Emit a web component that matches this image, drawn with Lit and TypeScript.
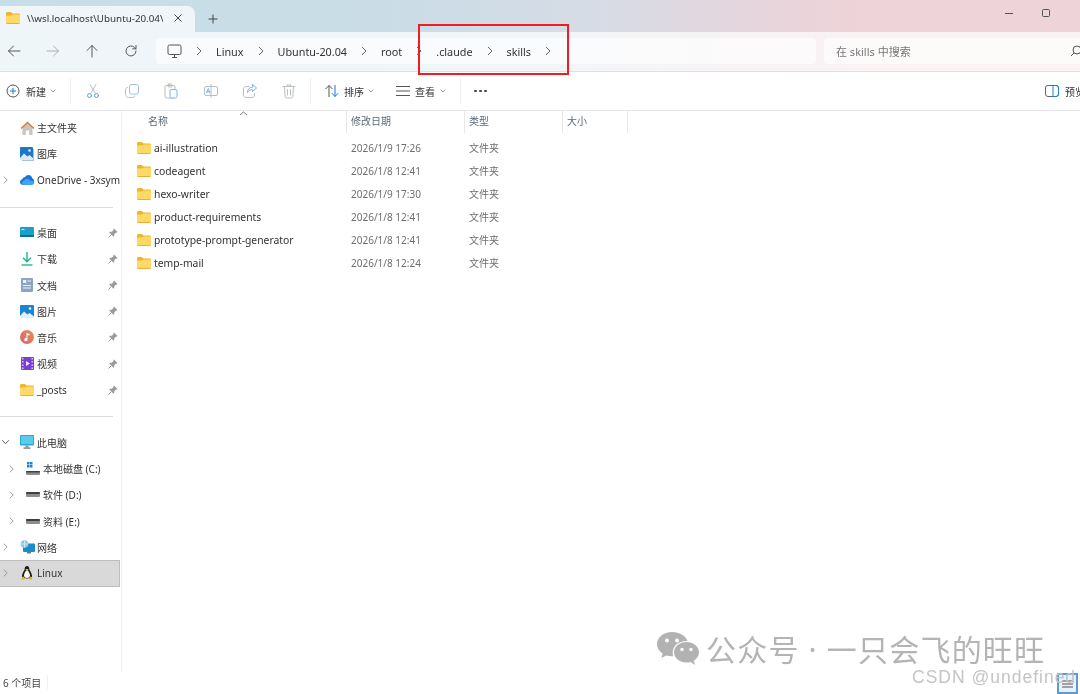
import { LitElement, html, svg, css } from "lit";
import { customElement } from "lit/decorators.js";

const stroke = (body: unknown, color = "#5f6368", w = 1) => html`<svg
    width="16"
    height="16"
    viewBox="0 0 16 16"
    fill="none"
    stroke=${color}
    stroke-width=${w}
    stroke-linecap="round"
    stroke-linejoin="round"
>
    ${body}
</svg>`;

const folder = html`<svg width="14" height="12" viewBox="0 0 14 12">
    <path d="M0 1.5C0 .7.6 0 1.4 0h3.4l1.8 1.6h6C13.4 1.6 14 2.200 14 3v2H0z" fill="#f0b429" />
    <path d="M0 3.600h5l1.700-1.200h6C13.400 2.400 14 3 14 3.800v6.800c0 .8-.6 1.400-1.400 1.400H1.400C.6 12 0 11.400 0 10.600z" fill="#ffd965" />
    <path d="M0 11h14v-.4c0 .8-.6 1.400-1.400 1.400H1.400C.6 12 0 11.400 0 10.600z" fill="#e9b13a" />
</svg>`;

const chevron = html`<svg class="chev" width="6" height="10" viewBox="0 0 6 10" fill="none" stroke="#666" stroke-width="1">
    <path d="M1 1l4 4-4 4" />
</svg>`;

const caret = html`<svg class="caret" width="6" height="4" viewBox="0 0 6 4" fill="none" stroke="#999" stroke-width="1">
    <path d="M.7.7L3 3 5.300.7" />
</svg>`;

const nav = [
    { off: false, path: svg`<path d="M14 8H2.500M7.500 3L2.500 8l5 5" />` },
    { off: true, path: svg`<path d="M2 8h11.500M8.500 3l5 5-5 5" />` },
    { off: false, path: svg`<path d="M8 14V2.500M3 7.500l5-5 5 5" />` },
    { off: false, path: svg`<path d="M13 8a5 5 0 1 1-1.500-3.600L13 5.800M13 2.500v3.300H9.700" />` },
];

const crumbs = ["Linux", "Ubuntu-20.04", "root", ".claude", "skills"];

const grey = "#b9bec2";
const actions = [
    svg`<circle cx="4.500" cy="12.500" r="2" stroke="#5aa2dc" /><circle cx="11.500" cy="12.500" r="2" stroke="#5aa2dc" /><path d="M5.500 10.800L11 1.500M10.500 10.800L5 1.500" stroke=${grey} />`,
    svg`<rect x="5.500" y="1.500" width="9" height="9.500" rx="2" stroke="#9cc3e2" /><path d="M3.500 4.500C2.300 4.800 1.500 5.700 1.500 7v4.500c0 1.700 1.300 3 3 3h4c1.200 0 2.100-.7 2.500-1.700" stroke=${grey} />`,
    svg`<rect x="2" y="2.500" width="10" height="12.500" rx="1.500" stroke=${grey} /><rect x="5" y="1" width="4" height="3" rx="1" stroke=${grey} /><rect x="7" y="6.500" width="7" height="8.500" rx="1.500" stroke="#7db5e2" fill="#fff" />`,
    svg`<rect x="1.500" y="3.500" width="13" height="9" rx="1.500" stroke=${grey} /><path d="M8 1.500v13" stroke=${grey} /><path d="M3.500 10l1.800-4.500L7 10M4 8.600h2.600" stroke="#7db5e2" />`,
    svg`<path d="M7 3.500H4C2.600 3.500 1.500 4.600 1.500 6v6c0 1.400 1.100 2.500 2.500 2.500h6c1.400 0 2.500-1.100 2.500-2.500v-1.500" stroke=${grey} /><path d="M10.500 1.500l4 3.500-4 3.500V6.700C8 6.700 6.500 7.500 5.500 9.500c0-3.500 2-5.300 5-5.500z" stroke="#7db5e2" />`,
    svg`<path d="M2 3.500h12M6 3.500V2h4v1.500M3.500 3.500l.6 10c0 .8.600 1.500 1.400 1.500h5c.8 0 1.400-.7 1.400-1.500l.6-10M6.500 6.500v5.500M9.500 6.500v5.500" stroke=${grey} />`,
];

const sideIcons: Record<string, unknown> = {
    home: html`<svg width="15" height="14" viewBox="0 0 15 14">
        <path d="M2.500 6.500L7.500 2l5 4.500V14h-3.300V9.500H5.800V14H2.500z" fill="#c9c5c0" />
        <path d="M.6 7L7.500.6 14.400 7l-1 1L7.500 2.600 1.600 8z" fill="#de7c34" />
    </svg>`,
    gallery: html`<svg width="14" height="14" viewBox="0 0 14 14">
        <rect width="13" height="13" rx="1" fill="#1b78c9" />
        <path d="M0 11l4-4.500 3.500 3 2-1.500L13 11v2H0z" fill="#dcebf7" />
        <circle cx="9.500" cy="3.500" r="1.300" fill="#dcebf7" />
        <path d="M13 2h1v12H2v-1h11z" fill="#9fc5e8" />
    </svg>`,
    cloud: html`<svg width="14" height="10" viewBox="0 0 14 10">
        <path d="M3.500 10C1.500 10 0 8.700 0 7c0-1.500 1-2.500 2.300-2.800C3 2.500 4 2 5 2.200 5.800.8 7 0 8.500 0c2 0 3.500 1.400 3.700 3.300 1.100.3 1.800 1.500 1.800 3.200C14 8.500 12.800 10 11 10z" fill="#1a73d9" />
        <path d="M4.500 10C3 10 2 9 2 7.800 2 6.500 3 5.700 4.200 5.600 5 4.300 6.200 3.500 7.800 3.800c1.200.2 2 1 2.400 2 1.800-.2 3.800.4 3.800 2 0 1.200-1.200 2.200-3 2.200z" fill="#3fa4ee" />
    </svg>`,
    desktop: html`<svg width="14" height="11" viewBox="0 0 14 11">
        <rect width="14" height="10" rx="1" fill="#1c9fc9" />
        <rect y="8" width="14" height="2" fill="#0e6e99" />
        <rect x="1.500" y="2" width="3" height="1" fill="#d5f1fa" />
    </svg>`,
    download: html`<svg width="12" height="14" viewBox="0 0 12 14" fill="none" stroke="#1fb58f" stroke-width="1.400">
        <path d="M6 0v9.500M2 5.800l4 4 4-4" />
        <path d="M.5 13h11" />
    </svg>`,
    docs: html`<svg width="12" height="14" viewBox="0 0 12 14">
        <rect width="12" height="14" rx="1" fill="#8da5c2" />
        <rect x="2" y="2" width="3.200" height="3" fill="#eef3f8" />
        <path d="M6.500 2.500H10v1H6.500zM2 7h8v1H2zM2 9.500h8v1H2z" fill="#eef3f8" />
    </svg>`,
    pictures: html`<svg width="14" height="13" viewBox="0 0 14 13">
        <rect width="14" height="13" rx="1" fill="#1b84d4" />
        <path d="M0 11l4-4.500 3.500 3 2-1.500L14 11.500V13H0z" fill="#e3f0fa" />
        <circle cx="10" cy="3.500" r="1.300" fill="#e3f0fa" />
    </svg>`,
    music: html`<svg width="14" height="14" viewBox="0 0 14 14">
        <defs>
            <linearGradient id="m" x1="0" y1="1" x2="1" y2="0">
                <stop offset="0" stop-color="#d8616a" />
                <stop offset="1" stop-color="#e8905a" />
            </linearGradient>
        </defs>
        <circle cx="7" cy="7" r="7" fill="url(#m)" />
        <path d="M6.500 3v5.200a1.600 1.600 0 1 0 1 1.500V5l2 .6V4z" fill="#fff" />
    </svg>`,
    video: html`<svg width="13" height="13" viewBox="0 0 13 13">
        <rect width="13" height="13" rx="1" fill="#7a3fd0" />
        <path d="M1 1h1.500v1.500H1zM1 4h1.500v1.500H1zM1 7.500h1.500V9H1zM1 10.500h1.500V12H1zM10.500 1H12v1.500h-1.500zM10.500 4H12v1.500h-1.500zM10.500 7.500H12V9h-1.500zM10.500 10.500H12V12h-1.500z" fill="#d9c4f5" />
        <path d="M5 4l4 2.500L5 9z" fill="#f2e9fc" />
    </svg>`,
    folder,
    pc: html`<svg width="14" height="14" viewBox="0 0 14 14">
        <rect width="14" height="10.500" rx="1" fill="#27a9d6" />
        <rect x="1" y="1" width="12" height="8" fill="#5ccbe8" />
        <path d="M5.500 10.500h3l.5 2H5z" fill="#8fa3ad" />
        <rect x="3.500" y="12.500" width="7" height="1.200" fill="#5e7480" />
    </svg>`,
    sys: html`<svg width="14" height="14" viewBox="0 0 14 14">
        <path d="M1 0h2.500v2.500H1zM4 0h2.500v2.500H4zM1 3h2.500v2.500H1zM4 3h2.500v2.500H4z" fill="#1f7fd1" />
        <rect y="9" width="14" height="4" rx="1" fill="#8a8f93" />
        <rect y="9" width="14" height="1.600" rx=".8" fill="#3c4043" />
    </svg>`,
    disk: html`<svg width="14" height="5" viewBox="0 0 14 5">
        <rect width="14" height="5" rx="1" fill="#8a8f93" />
        <rect width="14" height="2" rx="1" fill="#3c4043" />
    </svg>`,
    net: html`<svg width="15" height="14" viewBox="0 0 15 14">
        <rect x="3" y="3.500" width="12" height="8.500" rx="1" fill="#1b8bc9" />
        <circle cx="4.500" cy="4" r="3.800" fill="#8bc7e8" />
        <path d="M1 4h7M4.500.5v7" stroke="#e8f5fb" stroke-width=".7" />
        <rect x="7" y="12" width="4" height="1.500" fill="#6b7b85" />
    </svg>`,
    tux: html`<svg width="12" height="14" viewBox="0 0 12 14">
        <path d="M6 0C4.300 0 3.700 1.400 3.700 3c0 1.500-2.700 3.800-2.700 7 0 1.500 1 2.400 5 2.400s5-.9 5-2.400c0-3.200-2.700-5.500-2.700-7C8.300 1.400 7.700 0 6 0z" fill="#1d1d1d" />
        <path d="M6 4.200C4.700 4.200 3 7.500 3 9.500c0 1.500 1 2.400 3 2.400s3-.9 3-2.400c0-2-1.700-5.300-3-5.300z" fill="#f7f7f7" />
        <path d="M5 3h2l.5 1L6 5 4.500 4z" fill="#efb21a" />
        <path d="M.5 11.500L3 10.500l1 2.500-2.500 1zM11.500 11.500L9 10.500 8 13l2.500 1z" fill="#efb21a" />
    </svg>`,
};

type SideRow = { icon: string; text: string; chev?: "right" | "down"; pin?: boolean; sub?: boolean; on?: boolean };

const sideGroups: SideRow[][] = [
    [
        { icon: "home", text: "主文件夹" },
        { icon: "gallery", text: "图库" },
        { icon: "cloud", text: "OneDrive - 3xsym", chev: "right" },
    ],
    [
        { icon: "desktop", text: "桌面", pin: true },
        { icon: "download", text: "下载", pin: true },
        { icon: "docs", text: "文档", pin: true },
        { icon: "pictures", text: "图片", pin: true },
        { icon: "music", text: "音乐", pin: true },
        { icon: "video", text: "视频", pin: true },
        { icon: "folder", text: "_posts", pin: true },
    ],
    [
        { icon: "pc", text: "此电脑", chev: "down" },
        { icon: "sys", text: "本地磁盘 (C:)", chev: "right", sub: true },
        { icon: "disk", text: "软件 (D:)", chev: "right", sub: true },
        { icon: "disk", text: "资料 (E:)", chev: "right", sub: true },
        { icon: "net", text: "网络", chev: "right" },
        { icon: "tux", text: "Linux", chev: "right", on: true },
    ],
];

const files = [
    ["ai-illustration", "2026/1/9 17:26"],
    ["codeagent", "2026/1/8 12:41"],
    ["hexo-writer", "2026/1/9 17:30"],
    ["product-requirements", "2026/1/8 12:41"],
    ["prototype-prompt-generator", "2026/1/8 12:41"],
    ["temp-mail", "2026/1/8 12:24"],
];

@customElement("app-root")
export class AppRoot extends LitElement {
    renderSideRow(r: SideRow) {
        return html`
            <div class="side_row ${r.sub ? "sub" : ""} ${r.on ? "on" : ""}">
                <span class="side_chev ${r.chev === "down" ? "down" : ""}">${r.chev ? chevron : ""}</span>
                <span class="side_icon">${sideIcons[r.icon]}</span>
                <span class="side_text">${r.text}</span>
                ${r.pin
                    ? html`<svg class="pin" width="10" height="10" viewBox="0 0 10 10">
                          <path d="M6 .5L9.500 4 8.800 4.700 8 4.500 6.300 6.200 6.200 8 5.500 8.700 1.300 4.500 2 3.800 3.800 3.700 5.500 2 5.300 1.200z" fill="#9a9a9a" />
                          <path d="M3.200 6.800L.5 9.500" stroke="#9a9a9a" />
                      </svg>`
                    : ""}
            </div>
        `;
    }

    render() {
        return html`
            <div class="tt_titlebar">
                <div class="tt_tab">
                    ${folder}
                    <span class="tab_title">\\\\wsl.localhost\\Ubuntu-20.04\\</span>
                    <svg class="tab_close" width="10" height="10" viewBox="0 0 10 10" stroke="#444" stroke-width="1">
                        <path d="M1.500 1.500l7 7M8.500 1.500l-7 7" />
                    </svg>
                </div>
                <svg class="tab_add" width="10" height="10" viewBox="0 0 10 10" stroke="#444" stroke-width="1">
                    <path d="M5 .5v9M.5 5h9" />
                </svg>
                <div class="win_btns">
                    <span class="win_min"></span>
                    <span class="win_max"></span>
                </div>
            </div>

            <div class="tt_navbar">
                <div class="nav_btns">
                    ${nav.map(
                        (n) => html`<span class="nav_btn">${stroke(n.path, n.off ? "#a9adb1" : "#55595c")}</span>`
                    )}
                </div>
                <div class="address">
                    <svg class="monitor" width="15" height="15" viewBox="0 0 15 15" fill="none" stroke="#555">
                        <rect x="1" y="1" width="13" height="9.500" rx="1.500" />
                        <path d="M5 13.500h5M7.500 10.500v3" />
                    </svg>
                    ${chevron}
                    ${crumbs.map((c) => html`<span>${c}</span>${chevron}`)}
                </div>
                <div class="search">
                    <span>在 skills 中搜索</span>
                    <svg width="12" height="12" viewBox="0 0 12 12" fill="none" stroke="#555">
                        <circle cx="7" cy="5" r="4" />
                        <path d="M4 8L1 11" />
                    </svg>
                </div>
            </div>

            <div class="tt_toolbar">
                <div class="tool_new">
                    <svg width="14" height="14" viewBox="0 0 14 14" fill="none">
                        <circle cx="7" cy="7" r="6" stroke="#555" />
                        <path d="M7 4v6M4 7h6" stroke="#1a73d9" />
                    </svg>
                    <span>新建</span>
                    ${caret}
                </div>
                <i class="tool_sep"></i>
                <div class="tool_icons">${actions.map((a) => stroke(a))}</div>
                <i class="tool_sep"></i>
                <div class="tool_sort">
                    <svg width="16" height="14" viewBox="0 0 16 14" fill="none">
                        <path d="M5 13V1.500M1.500 5L5 1.500 8.500 5" stroke="#555" />
                        <path d="M11 1v11.500M7.800 9.200l3.200 3.300 3.200-3.300" stroke="#1a73d9" />
                    </svg>
                    <span>排序</span>
                    ${caret}
                </div>
                <div class="tool_view">
                    <svg width="14" height="12" viewBox="0 0 14 12" stroke="#555">
                        <path d="M0 1.500h14M0 6h14M0 10.500h14" />
                    </svg>
                    <span>查看</span>
                    ${caret}
                </div>
                <i class="tool_sep view_sep"></i>
                <div class="tool_more"><b></b><b></b><b></b></div>
                <div class="tool_preview">
                    <svg width="14" height="12" viewBox="0 0 14 12" fill="none">
                        <rect x=".5" y=".5" width="13" height="11" rx="2.500" stroke="#666" />
                        <path d="M8 .5h3C12.400.5 13.500 1.600 13.500 3v6c0 1.400-1.100 2.500-2.500 2.500H8z" stroke="#1a84dc" />
                    </svg>
                    <span>预览</span>
                </div>
            </div>

            <div class="tt_body">
                <div class="tt_side">
                    ${sideGroups.map(
                        (g, i) => html`
                            ${i ? html`<div class="side_hr"></div>` : ""}
                            <div class="side_group">${g.map((r) => this.renderSideRow(r))}</div>
                        `
                    )}
                </div>
                <div class="tt_list">
                    <div class="list_head">
                        <span class="c_name">名称</span>
                        <span class="c_date">修改日期</span>
                        <span class="c_type">类型</span>
                        <span class="c_size">大小</span>
                    </div>
                    <svg class="sort_mark" width="9" height="5" viewBox="0 0 9 5" fill="none" stroke="#777">
                        <path d="M1 4l3.500-3L8 4" />
                    </svg>
                    ${files.map(
                        (f) => html`
                            <div class="file_row">
                                <span class="f_name">${folder}<em>${f[0]}</em></span>
                                <span class="f_meta">${f[1]}</span>
                                <span class="f_meta">文件夹</span>
                            </div>
                        `
                    )}
                </div>
            </div>

            <div class="tt_status">
                <span>6 个项目</span>
                <i></i>
            </div>

            <div class="red_box"></div>
            <div class="watermark">
                <svg width="42" height="34" viewBox="0 0 42 34" fill="#b2b2b2">
                    <path d="M15 0C6.700 0 0 5.500 0 12.300c0 3.900 2.200 7.200 5.700 9.500L4.300 26l5-2.600c1.800.5 3.700.8 5.700.8h1.300c-.4-1.200-.6-2.400-.6-3.700 0-6.400 6-11.500 13.500-11.500h1.300C28.600 3.500 22.400 0 15 0z" />
                    <path d="M42 20.300c0-5.700-5.700-10.300-12.500-10.300S17 14.600 17 20.300s5.700 10.300 12.500 10.300c1.500 0 2.900-.2 4.200-.6L38 33l-1.100-4.200c3-1.900 5.100-5 5.100-8.500z" />
                    <circle cx="10" cy="8.500" r="2" fill="#fff" />
                    <circle cx="20" cy="8.500" r="2" fill="#fff" />
                    <circle cx="25" cy="17.500" r="1.700" fill="#fff" />
                    <circle cx="34" cy="17.500" r="1.700" fill="#fff" />
                </svg>
                <span>公众号 · 一只会飞的旺旺</span>
            </div>
            <div class="corner_btn">
                <svg width="11" height="8" viewBox="0 0 11 8" stroke="#555">
                    <path d="M0 1h11M0 4h11M0 7h11" />
                </svg>
            </div>
            <div class="csdn">CSDN @undefined</div>
        `;
    }

    static styles = css`
        :host {
            display: flex;
            flex-direction: column;
            position: relative;
            width: 1080px;
            height: 694px;
            overflow: hidden;
            background: #fff;
            color: #333;
            font-family: "Noto Sans", "Noto Sans CJK SC", sans-serif;
            font-size: 10px;
            background-image: linear-gradient(90deg, #c8dfe8 0%, #c9dde7 33%, #d6dce6 55%, #e6d5dc 70%, #eed3d8 80%, #eed3d8 100%);
            background-repeat: no-repeat;
            background-size: 100% 72px;
            filter: blur(0.3px);
        }
        svg {
            display: block;
            flex: none;
        }

        .tt_titlebar {
            height: 32px;
            display: flex;
            align-items: flex-end;
            flex: none;
            position: relative;
        }
        .tt_tab {
            width: 195px;
            height: 26px;
            box-sizing: border-box;
            padding: 0 12px 2px 6px;
            display: flex;
            align-items: center;
            border-radius: 0 8px 0 0;
            background: #eff5f8;
        }
        .tab_title {
            margin-left: 7px;
            width: 137px;
            overflow: hidden;
            white-space: nowrap;
            font-size: 9.800px;
            color: #333;
        }
        .tab_close {
            margin-left: 10px;
        }
        .tab_add {
            margin: 0 0 8px 13px;
        }
        .win_btns {
            margin-left: auto;
            margin-right: 30px;
            margin-bottom: 15px;
            display: flex;
            align-items: center;
            gap: 29px;
        }
        .win_min {
            width: 8px;
            height: 1px;
            background: #555;
        }
        .win_max {
            width: 6px;
            height: 6px;
            border: 1.500px solid #555;
            border-radius: 1.500px;
        }

        .tt_navbar {
            height: 40px;
            flex: none;
            box-sizing: border-box;
            display: flex;
            align-items: center;
            gap: 11px;
            padding-bottom: 1px;
            background: rgba(255, 255, 255, 0.7);
            border-bottom: 1px solid rgba(190, 200, 205, 0.45);
        }
        .nav_btns {
            display: flex;
            gap: 11px;
        }
        .nav_btn {
            width: 28px;
            display: flex;
            justify-content: center;
        }
        .address,
        .search {
            height: 26px;
            display: flex;
            align-items: center;
            border-radius: 4px;
            background: rgba(255, 255, 255, 0.6);
            box-sizing: border-box;
            font-size: 10.800px;
            white-space: nowrap;
            flex: none;
        }
        .address {
            width: 660px;
            padding-left: 11px;
            gap: 14px;
        }
        .search {
            width: 262px;
            margin-left: -3px;
            padding: 0 5px 0 12px;
            justify-content: space-between;
            color: #777;
            font-size: 11px;
        }
        .search svg {
            margin-right: -1px;
        }

        .tt_toolbar {
            height: 39px;
            flex: none;
            box-sizing: border-box;
            background: #fff;
            display: flex;
            align-items: center;
            font-size: 10px;
            border-bottom: 1px solid #e6e6ea;
        }
        .tool_new,
        .tool_sort,
        .tool_view,
        .tool_preview {
            display: flex;
            align-items: center;
        }
        .tool_new {
            width: 70px;
            padding-left: 6px;
            box-sizing: border-box;
            gap: 6px;
        }
        .tool_new .caret {
            margin-left: -2px;
        }
        .tool_sep {
            width: 1px;
            height: 26px;
            background: #eeeeee;
            flex: none;
        }
        .tool_icons {
            display: flex;
            gap: 23.200px;
            padding-left: 14px;
            width: 239px;
            box-sizing: border-box;
        }
        .tool_sort {
            padding-left: 13px;
            gap: 4px;
            width: 85px;
            box-sizing: border-box;
        }
        .tool_view {
            gap: 5px;
            width: 64px;
        }
        .tool_more {
            display: flex;
            gap: 2.500px;
            padding-left: 13px;
        }
        .tool_more b {
            width: 2.500px;
            height: 2.500px;
            border-radius: 50%;
            background: #444;
        }
        .tool_preview {
            margin-left: auto;
            gap: 6px;
            width: 35px;
            overflow: hidden;
            white-space: nowrap;
            flex: none;
        }

        .tt_body {
            flex: 1;
            display: flex;
            min-height: 0;
        }
        .tt_side {
            width: 122px;
            flex: none;
            box-sizing: border-box;
            border-right: 1px solid #f0f0f0;
            padding-top: 3.500px;
        }
        .side_group {
            display: flex;
            flex-direction: column;
        }
        .side_hr {
            height: 1px;
            width: 113px;
            margin: 13.500px 0 12px;
            background: #dcdcdc;
        }
        .side_row {
            height: 26.200px;
            width: 120px;
            box-sizing: border-box;
            display: flex;
            align-items: center;
            position: relative;
            white-space: nowrap;
            overflow: hidden;
        }
        .side_row.on {
            background: #d9d9d9;
            border: 1px solid #bdbdbd;
            border-left: 0;
        }
        .side_chev {
            width: 20px;
            flex: none;
            display: flex;
            justify-content: center;
            padding-right: 10px;
            box-sizing: border-box;
        }
        .side_chev .chev {
            width: 5px;
            stroke: #888;
        }
        .side_chev.down .chev {
            transform: rotate(90deg);
            stroke: #333;
        }
        .side_icon {
            width: 14px;
            flex: none;
            display: flex;
            justify-content: center;
        }
        .side_text {
            margin-left: 3px;
            font-size: 10px;
        }
        .side_row.sub .side_chev {
            width: 26px;
            padding-right: 3px;
        }
        .pin {
            position: absolute;
            right: 2px;
            top: 8px;
        }

        .tt_list {
            flex: 1;
            padding-left: 15px;
            position: relative;
        }
        .list_head {
            height: 22px;
            margin-bottom: 3px;
            display: grid;
            grid-template-columns: 210px 118px 98px 65px;
            color: #5d6b78;
            font-size: 10px;
        }
        .list_head span {
            display: flex;
            align-items: center;
            padding: 0 0 3px 4px;
            box-sizing: border-box;
            border-right: 1px solid #e8e8e8;
        }
        .list_head .c_name {
            padding-left: 11px;
        }
        .sort_mark {
            position: absolute;
            left: 117px;
            top: 0;
        }
        .file_row {
            height: 23px;
            display: grid;
            grid-template-columns: 210px 118px 98px;
            align-items: center;
        }
        .f_name {
            display: flex;
            align-items: center;
            gap: 3px;
        }
        .f_name em {
            font-style: normal;
            color: #333;
            font-size: 10.350px;
        }
        .f_meta {
            padding-left: 4px;
            color: #6e6e6e;
            font-size: 10px;
        }

        .tt_status {
            height: 22px;
            flex: none;
            display: flex;
            align-items: center;
            padding: 0 0 2px 3px;
            box-sizing: border-box;
            font-size: 10px;
            color: #444;
        }
        .tt_status i {
            width: 1px;
            height: 14px;
            margin-left: 6px;
            background: #f0f0f0;
        }

        .red_box {
            position: absolute;
            left: 418px;
            top: 24px;
            width: 151px;
            height: 51px;
            box-sizing: border-box;
            border: 2px solid #f01c24;
        }
        .watermark {
            position: absolute;
            left: 657px;
            top: 628px;
            display: flex;
            align-items: center;
            gap: 7px;
            color: #b4b4b4;
            font-size: 30px;
            letter-spacing: 1.200px;
            white-space: nowrap;
        }
        .watermark span {
            margin-top: -2px;
        }
        .csdn {
            position: absolute;
            left: 912px;
            top: 667px;
            font-family: "Liberation Sans", sans-serif;
            font-size: 17.500px;
            letter-spacing: 1px;
            color: #c4c4c4;
            white-space: nowrap;
        }
        .corner_btn {
            position: absolute;
            left: 1057px;
            top: 673px;
            width: 21px;
            height: 21px;
            box-sizing: border-box;
            border: 2px solid #5b9bd5;
            background: #eaf2f9;
            display: flex;
            align-items: center;
            justify-content: center;
        }
    `;
}
